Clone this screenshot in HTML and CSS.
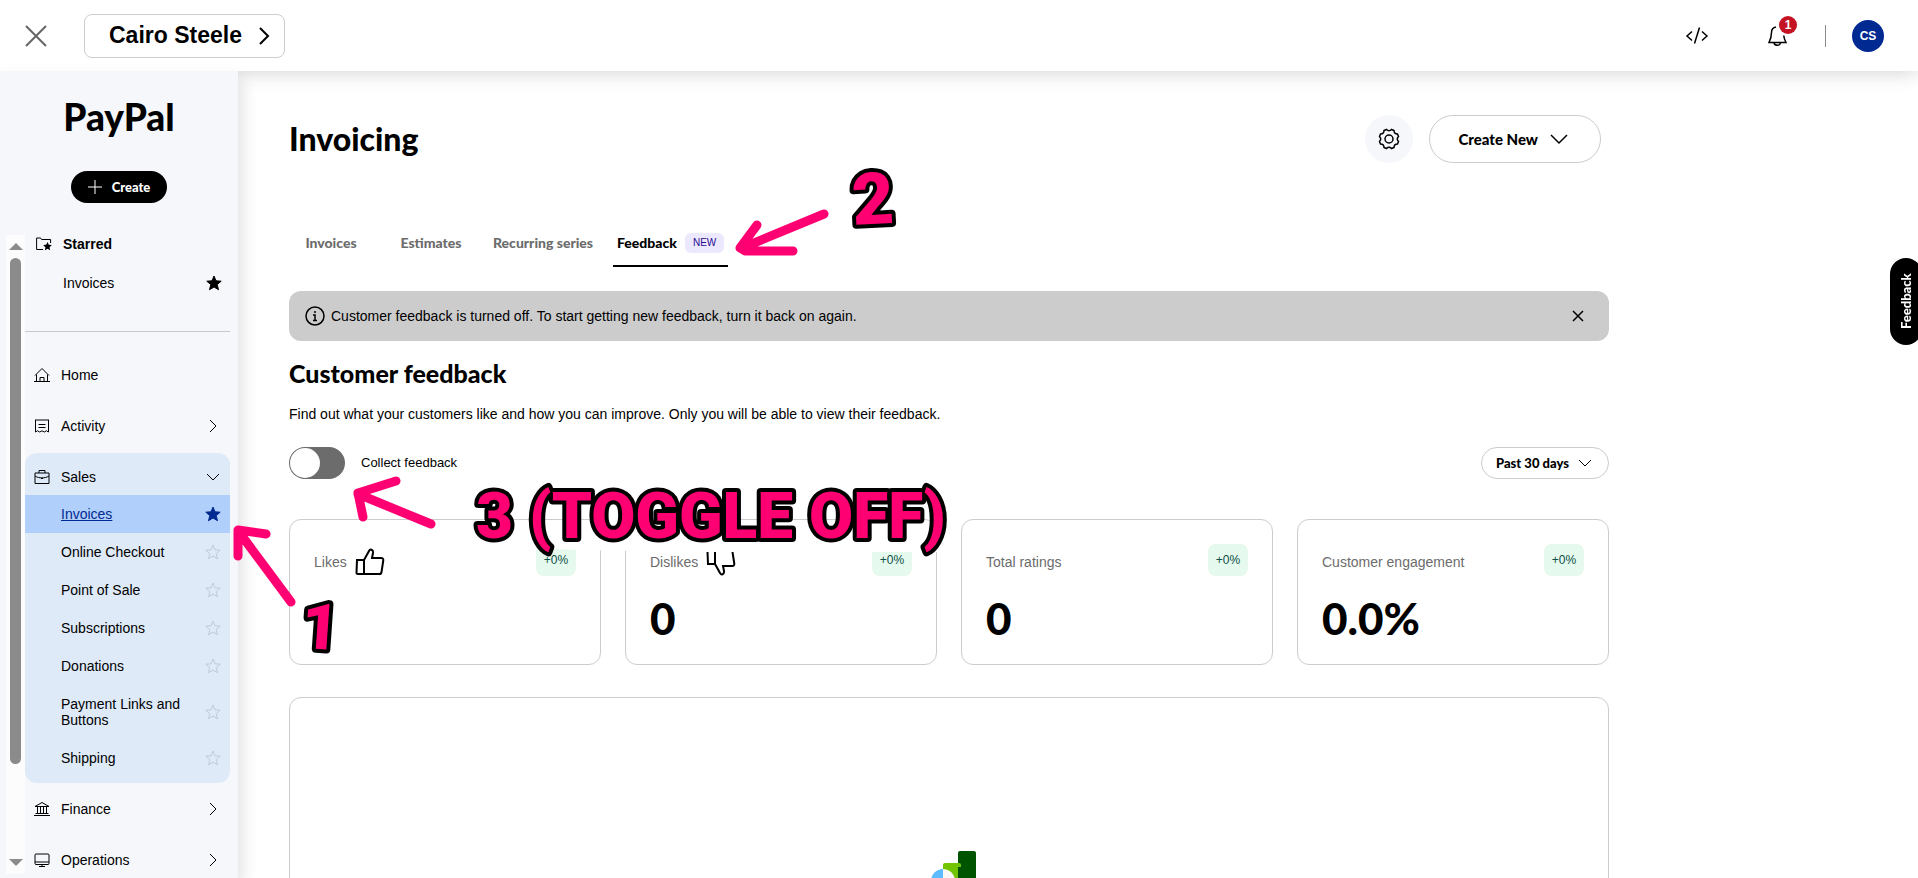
FILE: index.html
```html
<!DOCTYPE html>
<html lang="en">
  <head>
    <meta charset="utf-8" />
    <title>Invoicing - PayPal</title>
    <link rel="stylesheet" href="styles.css">
  </head>

  <body>
    <!-- shared icons -->
    <svg class="sprite" aria-hidden="true">
      <symbol id="chevron-right" viewBox="0 0 16 16"><path d="M5 2l6 6-6 6" /></symbol>
      <symbol id="chevron-down" viewBox="0 0 16 16"><path d="M2 5l6 6 6-6" /></symbol>
      <symbol id="star" viewBox="0 0 16 16">
        <path d="M8 1l2 4.800 5.200.4-4 3.400 1.300 5.100L8 12l-4.500 2.700 1.300-5.100-4-3.400L6 5.800z" />
      </symbol>
    </svg>

    <header class="topbar">
      <button class="close-btn" aria-label="Close">
        <svg class="icon" width="24" height="24" viewBox="0 0 24 24"><path d="M2 2l20 20M22 2L2 22" /></svg>
      </button>
      <button class="account-btn">
        Cairo Steele
        <svg class="icon" width="18" height="20" viewBox="0 0 18 20"><path d="M6 2l8 8-8 8" /></svg>
      </button>
      <div class="topbar-right">
        <button class="plain-btn" aria-label="Developer">
          <svg class="icon" width="24" height="24" viewBox="0 0 24 24"><path d="M7 7.500l-5 4.500 5 4.500M17 7.500l5 4.500-5 4.500M14.500 3.500l-5 16" /></svg>
        </button>
        <button class="plain-btn bell" aria-label="Notifications">
          <svg class="icon" width="24" height="24" viewBox="0 0 24 24">
            <path d="M11 3C8 3.500 6.500 5.500 6.500 8.500c0 5-.5 6-2.500 10h17c-1.500-3-2-4-2.300-7M9 19c.7 3 6 3 6.500 0" />
          </svg>
          <span class="bell-count">1</span>
        </button>
        <span class="divider"></span>
        <button class="avatar">CS</button>
      </div>
    </header>

    <div class="shell">
      <aside class="sidebar">
        <a href="#" class="logo">PayPal</a>
        <button class="create-btn">
          <svg class="icon" width="14" height="14" viewBox="0 0 14 14"><path d="M7 0v14M0 7h14" /></svg>
          Create
        </button>

        <div class="nav-area">
          <div class="scrollbar">
            <span class="arrow up"></span>
            <span class="thumb"></span>
            <span class="track-end"></span>
            <span class="arrow down"></span>
          </div>
          <nav class="nav">
            <div class="starred">
              <div class="starred-head">
                <svg class="icon" width="16" height="16" viewBox="0 0 16 16">
                  <path d="M7 13.500H.6V2h4l1 1.500h9V7" />
                  <path class="solid" d="M11.500 6l1.300 2.700 3 .4-2.200 2.100.5 3-2.600-1.400-2.600 1.400.5-3L7.200 9.100l3-.4z" />
                </svg>
                Starred
              </div>
              <a href="#" class="starred-link">Invoices <svg class="star filled"><use href="#star" /></svg></a>
            </div>

            <a href="#" class="nav-item">
              <svg class="icon" width="16" height="16" viewBox="0 0 16 16"><path d="M0 14.500h16M2.500 14.500V7.500M13.500 14.500V7.500M1 8.500l7-7 7 7M6 14.500v-4h4v4" /></svg>
              Home
            </a>
            <a href="#" class="nav-item">
              <svg class="icon" width="16" height="16" viewBox="0 0 16 16"><path d="M1 2h14M1.500 2v12l2-1.200 2.200 1.200L8 12.800l2.300 1.200 2.200-1.200 2 1.200V2M4.500 6.500h7M4.500 9.500h7" /></svg>
              Activity
              <svg class="chev"><use href="#chevron-right" /></svg>
            </a>

            <div class="nav-group">
              <a href="#" class="nav-item">
                <svg class="icon" width="16" height="16" viewBox="0 0 16 16"><path d="M1 4h14v10.500H1zM5 4V1.500h6V4M1 7c4 2.500 10 2.500 14 0M7 9.500h2" /></svg>
                Sales
                <svg class="chev"><use href="#chevron-down" /></svg>
              </a>
              <a href="#" class="sub-item active">Invoices <svg class="star filled"><use href="#star" /></svg></a>
              <a href="#" class="sub-item">Online Checkout <svg class="star"><use href="#star" /></svg></a>
              <a href="#" class="sub-item">Point of Sale <svg class="star"><use href="#star" /></svg></a>
              <a href="#" class="sub-item">Subscriptions <svg class="star"><use href="#star" /></svg></a>
              <a href="#" class="sub-item">Donations <svg class="star"><use href="#star" /></svg></a>
              <a href="#" class="sub-item">Payment Links and Buttons <svg class="star"><use href="#star" /></svg></a>
              <a href="#" class="sub-item">Shipping <svg class="star"><use href="#star" /></svg></a>
            </div>

            <a href="#" class="nav-item">
              <svg class="icon" width="16" height="16" viewBox="0 0 16 16"><path d="M0 14.500h16M1.500 12.500h13M1 5.500h14L8 1.500zM3.500 5.500v7M6.500 5.500v7M9.500 5.500v7M12.500 5.500v7" /></svg>
              Finance
              <svg class="chev"><use href="#chevron-right" /></svg>
            </a>
            <a href="#" class="nav-item">
              <svg class="icon" width="16" height="16" viewBox="0 0 16 16"><rect x="1" y="2" width="14" height="10.500" rx="1" /><path d="M1 10h14M8 12.500v2M5 14.500h6" /></svg>
              Operations
              <svg class="chev"><use href="#chevron-right" /></svg>
            </a>
          </nav>
        </div>
      </aside>

      <main class="main">
        <div class="content">
          <div class="title-row">
            <h1>Invoicing</h1>
            <button class="gear-btn" aria-label="Settings">
              <svg class="icon" width="22" height="22" viewBox="0 0 22 22">
                <circle cx="11" cy="11" r="4" />
                <path d="M8.500 1.500Q11 4 13.500 1.500L16 2.500Q16 6 19.500 6l1 2.500Q18 11 20.500 13.500l-1 2.500Q16 16 16 19.500l-2.500 1Q11 18 8.500 20.500l-2.500-1Q6 16 2.500 16l-1-2.500Q4 11 1.500 8.500l1-2.500Q6 6 6 2.500z" />
              </svg>
            </button>
            <button class="create-new-btn">
              Create New
              <svg class="icon" width="18" height="18" viewBox="0 0 18 18"><path d="M1 5l8 8 8-8" /></svg>
            </button>
          </div>

          <nav class="tabs">
            <a href="#" class="tab">Invoices</a>
            <a href="#" class="tab">Estimates</a>
            <a href="#" class="tab">Recurring series</a>
            <a href="#" class="tab active">Feedback <span class="new-badge">NEW</span></a>
          </nav>

          <div class="banner">
            <svg class="icon" width="20" height="20" viewBox="0 0 20 20"><circle cx="10" cy="10" r="9" /><path d="M8 9h2v5M8 14.500h4M10 5v2" /></svg>
            <span>Customer feedback is turned off. To start getting new feedback, turn it back on again.</span>
            <button class="plain-btn" aria-label="Dismiss">
              <svg class="icon" width="12" height="12" viewBox="0 0 12 12"><path d="M1 1l10 10M11 1L1 11" /></svg>
            </button>
          </div>

          <h2>Customer feedback</h2>
          <p class="desc">Find out what your customers like and how you can improve. Only you will be able to view their feedback.</p>

          <div class="controls">
            <input type="checkbox" role="switch" id="collect" class="toggle" />
            <label for="collect">Collect feedback</label>
            <div class="period">
              <select aria-label="Period">
                <option>Past 30 days</option>
              </select>
              <svg class="icon" width="14" height="14" viewBox="0 0 14 14"><path d="M1 4l6 6 6-6" /></svg>
            </div>
          </div>

          <div class="cards">
            <div class="card">
              <div class="card-head">
                <span>Likes</span>
                <svg class="icon" width="30" height="28" viewBox="0 0 30 28">
                  <path d="M2 12h7v14H3c-1 0-1.500-.5-1.500-1.500zM9 12l5-9c1-2.500 4.500-1.500 4 2l-1 5h9c2 0 2.500 1 2.200 3l-1.700 11c-.2 1.500-1 2-2 2H9" />
                </svg>
                <span class="change">+0%</span>
              </div>
            </div>
            <div class="card">
              <div class="card-head">
                <span>Dislikes</span>
                <svg class="icon" width="30" height="28" viewBox="0 0 30 28">
                  <path d="M2 16h7V2H3c-1 0-1.500.5-1.500 1.500zM9 16l5 9c1 2.500 4.500 1.500 4-2l-1-5h9c2 0 2.500-1 2.200-3L26.500 4c-.2-1.500-1-2-2-2H9" />
                </svg>
                <span class="change">+0%</span>
              </div>
              <div class="value">0</div>
            </div>
            <div class="card">
              <div class="card-head">
                <span>Total ratings</span>
                <span class="change">+0%</span>
              </div>
              <div class="value">0</div>
            </div>
            <div class="card">
              <div class="card-head">
                <span>Customer engagement</span>
                <span class="change">+0%</span>
              </div>
              <div class="value">0.0%</div>
            </div>
          </div>

          <div class="chart-panel">
            <svg width="100" height="80" viewBox="0 0 100 80">
              <rect x="59" y="4" width="18" height="70" rx="2" fill="#005400" />
              <rect x="44" y="16" width="18" height="58" rx="2" fill="#72c400" />
              <rect x="59" y="20" width="18" height="54" fill="#005400" />
              <path d="M44 22a12 12 0 0 0 0 24z" fill="#5cbcff" />
              <path d="M44 22a12 12 0 0 1 0 24z" fill="#faf8f5" />
            </svg>
          </div>
        </div>
      </main>
    </div>

    <button class="feedback-tab">Feedback</button>

    <!-- hand drawn notes on top of the page -->
    <svg class="notes" width="1000" height="700" viewBox="0 0 1000 700">
      <path class="halo" d="M474 502H948M474 534L580 538 700 540H948" />
      <path class="arrow-line" d="M291 602L239 532M266 534L238 530V556" />
      <path class="arrow-line" d="M824 214L742 248M757 225L740 248 745 251H793" />
      <path class="arrow-line" d="M431 524L358 494M396 481L358 493 363 517" />
      <text class="note" x="302" y="649" transform="rotate(4 320 625)">1</text>
      <text class="note large" x="852" y="224" transform="rotate(-3 873 200)">2</text>
      <text class="note" x="476" y="538">3 (TOGGLE OFF)</text>
    </svg>
  </body>
</html>
```
FILE: styles.css
```css
:root {
  --font-body: "Liberation Sans", Arial, sans-serif;
  --font-head: Lato, "Liberation Sans", sans-serif;
  --navy: #002991;
  --grey: #6c6c6c;
  --line: #cccccc;
  --pink: #ff0073;
}

* {
  box-sizing: border-box;
}

body {
  margin: 0;
  height: 100vh;
  display: flex;
  flex-direction: column;
  overflow: hidden;
  font-family: var(--font-body);
  font-size: 14px;
  line-height: 20px;
  color: #000;
  background: #fff;
}

a {
  color: inherit;
  text-decoration: none;
}

button {
  font-family: inherit;
  color: inherit;
  border: none;
  background: none;
  padding: 0;
  cursor: pointer;
}

.sprite {
  display: none;
}

.icon,
.chev,
.star {
  flex: none;
  display: block;
  fill: none;
  stroke: currentColor;
}

/* top bar */
.topbar {
  position: relative;
  z-index: 1;
  flex: none;
  display: flex;
  align-items: center;
  height: 71px;
  padding: 0 34px 0 24px;
  background: #fff;
  box-shadow: 0 0 20px rgba(0, 0, 0, 0.2);
}

.close-btn {
  color: #666;
}

.close-btn .icon {
  stroke-width: 2;
}

.account-btn {
  display: flex;
  align-items: center;
  gap: 12px;
  height: 44px;
  margin-left: 36px;
  padding: 0 12px 0 24px;
  border: 1px solid var(--line);
  border-radius: 8px;
  font-size: 23px;
  font-weight: 700;
}

.account-btn .icon {
  stroke-width: 2;
}

.topbar-right {
  display: flex;
  align-items: center;
  margin-left: auto;
}

.topbar-right .icon {
  stroke-width: 1.5;
}

.bell {
  position: relative;
  margin-left: 56px;
}

.bell-count {
  position: absolute;
  top: -8px;
  right: -8px;
  width: 18px;
  border-radius: 50%;
  background: #c41424;
  color: #fff;
  font-size: 12px;
  font-weight: 700;
  line-height: 18px;
}

.divider {
  width: 1px;
  height: 22px;
  margin: 0 26px 0 36px;
  background: #8c8c8c;
}

.avatar {
  width: 32px;
  height: 32px;
  border-radius: 50%;
  background: var(--navy);
  color: #fff;
  font-size: 12px;
  font-weight: 700;
}

/* sidebar */
.shell {
  flex: 1;
  min-height: 0;
  display: flex;
}

.sidebar {
  position: relative;
  z-index: 2;
  flex: none;
  display: flex;
  flex-direction: column;
  align-items: center;
  width: 238px;
  padding-top: 26px;
  background: #f5f7fb;
  box-shadow: 4px 8px 16px rgba(0, 0, 0, 0.12);
}

.logo {
  font-family: var(--font-head);
  font-size: 37px;
  font-weight: 900;
  line-height: 40px;
}

.create-btn {
  flex: none;
  display: flex;
  align-items: center;
  justify-content: center;
  gap: 10px;
  width: 96px;
  height: 32px;
  margin-top: 34px;
  border-radius: 16px;
  background: #000;
  color: #fff;
  font-family: var(--font-head);
  font-size: 13px;
  font-weight: 900;
}

.nav-area {
  flex: 1;
  min-height: 0;
  display: flex;
  width: 100%;
  margin-top: 32px;
  padding: 0 8px 0 6px;
}

.scrollbar {
  flex: none;
  display: flex;
  flex-direction: column;
  align-items: center;
  width: 19px;
  margin-bottom: 4px;
  padding: 8px 0;
  background: #fcfcfc;
}

.thumb {
  flex: 16;
  width: 11px;
  margin-top: 8px;
  border-radius: 6px;
  background: #8b8b8b;
}

.track-end {
  flex: 3;
}

.arrow {
  border: 7px solid transparent;
}

.arrow.up {
  border-top: none;
  border-bottom-color: #8b8b8b;
}

.arrow.down {
  border-bottom: none;
  border-top-color: #8b8b8b;
}

.nav {
  flex: 1;
  overflow: hidden;
}

.starred {
  margin-bottom: 17px;
  padding-bottom: 29px;
  border-bottom: 1px solid #c6c9cf;
}

.starred-head {
  display: flex;
  align-items: center;
  gap: 11px;
  height: 18px;
  padding-left: 11px;
  font-weight: 700;
}

.starred-link {
  display: flex;
  align-items: center;
  justify-content: space-between;
  height: 38px;
  margin-top: 11px;
  padding: 0 8px 0 38px;
}

.nav-item {
  display: flex;
  align-items: center;
  gap: 11px;
  height: 51px;
  padding: 0 9px;
}

.solid {
  fill: currentColor;
  stroke: none;
}

.star,
.chev {
  width: 16px;
  height: 16px;
  margin-left: auto;
}

.star {
  color: #bccbdc;
}

.star.filled {
  color: inherit;
  fill: currentColor;
}

.nav-group {
  margin-top: 2px;
  padding: 6px 0;
  border-radius: 12px;
  background: #deeaf8;
}

.nav-group .nav-item {
  height: 36px;
}

.sub-item {
  display: flex;
  align-items: center;
  gap: 16px;
  padding: 11px 9px 11px 36px;
  line-height: 16px;
}

.sub-item.active {
  background: #b0cffa;
  color: var(--navy);
  text-decoration: underline;
}

/* main column */
.main {
  flex: 1;
  min-width: 0;
  padding: 44px 50px 0 51px;
  overflow-y: auto;
  scrollbar-width: none;
}

.content {
  max-width: 1320px;
}

.title-row {
  display: flex;
  align-items: center;
  gap: 16px;
  padding-right: 8px;
}

h1,
h2 {
  margin: 0;
  font-family: var(--font-head);
  font-weight: 900;
}

h1 {
  flex: 1;
  font-size: 32px;
  line-height: 40px;
}

.gear-btn {
  display: flex;
  align-items: center;
  justify-content: center;
  width: 48px;
  height: 48px;
  border-radius: 50%;
  background: #f5f7fb;
}

.gear-btn .icon,
.create-new-btn .icon {
  stroke-width: 1.5;
}

.create-new-btn {
  display: flex;
  align-items: center;
  gap: 12px;
  height: 48px;
  padding: 0 32px 0 28px;
  border: 1px solid var(--line);
  border-radius: 24px;
  font-family: var(--font-head);
  font-size: 15px;
  font-weight: 900;
}

.tabs {
  display: flex;
  gap: 16px;
  margin-top: 56px;
}

.tab {
  display: flex;
  align-items: center;
  justify-content: center;
  gap: 8px;
  min-width: 84px;
  height: 48px;
  padding: 2px 4px 0;
  border-bottom: 2px solid transparent;
  color: var(--grey);
  font-family: var(--font-head);
  font-size: 14px;
  font-weight: 900;
}

.tab.active {
  color: #000;
  border-bottom-color: #000;
}

.new-badge {
  padding: 0 8px;
  border-radius: 6px;
  background: #ece8fd;
  color: #2c0b8e;
  font-family: var(--font-body);
  font-size: 10px;
  font-weight: 400;
}

.banner {
  display: flex;
  align-items: center;
  gap: 6px;
  height: 50px;
  margin-top: 24px;
  padding: 0 25px 0 16px;
  border-radius: 12px;
  background: #ccc;
}

.banner .plain-btn {
  margin-left: auto;
}

.banner .icon {
  stroke-width: 1.5;
}

h2 {
  margin-top: 17px;
  font-size: 25px;
  line-height: 30px;
}

.desc {
  margin: 16px 0 23px;
}

.controls {
  display: flex;
  align-items: center;
  gap: 16px;
  height: 32px;
  font-size: 13px;
}

.toggle {
  appearance: none;
  position: relative;
  width: 56px;
  height: 32px;
  margin: 0;
  border-radius: 16px;
  background: var(--grey);
}

.toggle::before {
  content: "";
  position: absolute;
  top: 1px;
  left: 1px;
  width: 30px;
  height: 30px;
  border-radius: 50%;
  background: #fff;
}

.period {
  position: relative;
  margin-left: auto;
}

.period select {
  appearance: none;
  width: 128px;
  height: 32px;
  padding: 0 36px 0 14px;
  border: 1px solid var(--line);
  border-radius: 16px;
  background: #fff;
  color: #000;
  font-family: var(--font-head);
  font-size: 13px;
  font-weight: 900;
}

.period .icon {
  position: absolute;
  top: 9px;
  right: 17px;
  pointer-events: none;
}

.cards {
  display: grid;
  grid-template-columns: repeat(4, 1fr);
  gap: 24px;
  margin-top: 40px;
}

.card {
  min-height: 146px;
  padding: 24px;
  border: 1px solid var(--line);
  border-radius: 12px;
}

.card-head {
  display: flex;
  align-items: flex-end;
  gap: 8px;
  height: 32px;
  color: var(--grey);
  line-height: 28px;
}

.card-head .icon {
  color: #000;
  stroke-width: 2;
}

.change {
  margin-left: auto;
  width: 40px;
  border-radius: 8px;
  background: #e6f9ee;
  color: #0b4f45;
  font-size: 12px;
  line-height: 32px;
  text-align: center;
}

.value {
  margin-top: 20px;
  font-family: var(--font-head);
  font-size: 44px;
  font-weight: 900;
  line-height: 44px;
}

.chart-panel {
  display: flex;
  justify-content: center;
  margin-top: 32px;
  padding: 149px 0 120px;
  border: 1px solid var(--line);
  border-radius: 12px;
}

/* side tab hanging off the window edge */
.feedback-tab {
  position: fixed;
  top: 258px;
  right: -4px;
  width: 32px;
  height: 87px;
  border-radius: 16px;
  background: #000;
  color: #fff;
  font-family: var(--font-head);
  font-size: 13px;
  font-weight: 900;
  writing-mode: vertical-rl;
  transform: rotate(180deg);
}

.notes {
  position: absolute;
  top: 0;
  left: 0;
  z-index: 3;
  pointer-events: none;
}

.halo {
  fill: none;
  stroke: #fff;
  stroke-width: 24;
  stroke-linecap: round;
}

.arrow-line {
  fill: none;
  stroke: var(--pink);
  stroke-width: 9;
  stroke-linecap: round;
  stroke-linejoin: round;
}

.note {
  fill: var(--pink);
  stroke: #000;
  stroke-width: 8;
  stroke-linejoin: round;
  paint-order: stroke;
  font-family: Roboto, sans-serif;
  font-size: 64px;
  font-weight: 900;
}

.note.large {
  font-size: 72px;
}
```
